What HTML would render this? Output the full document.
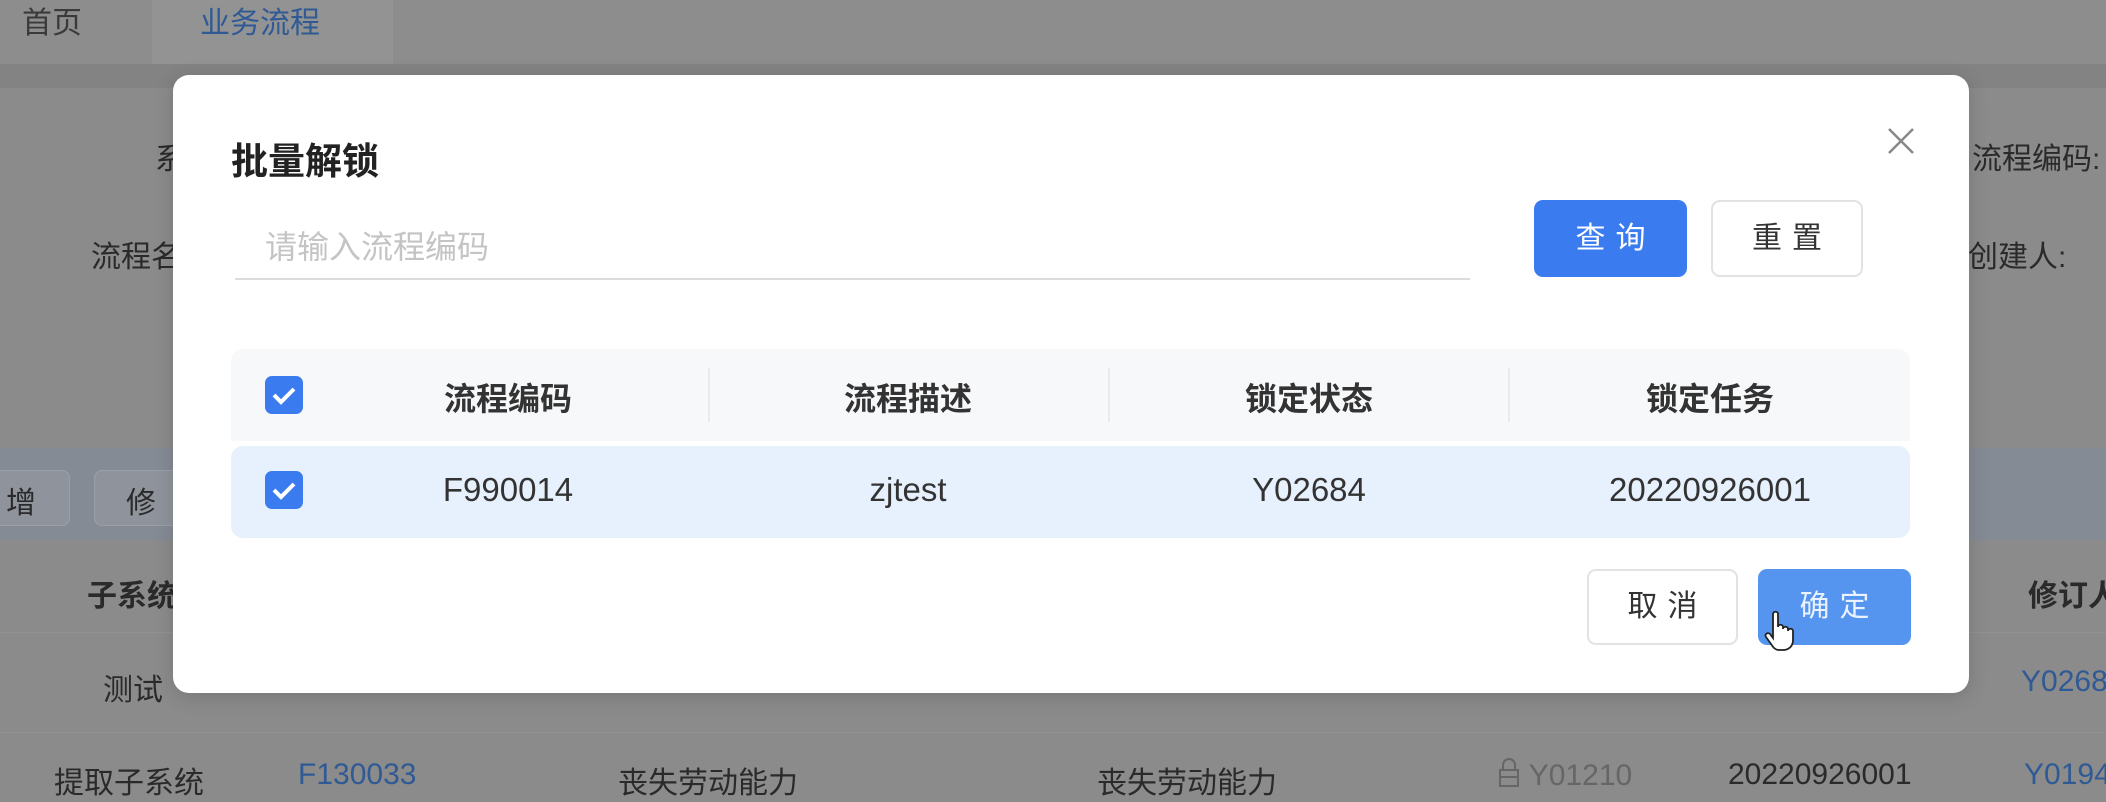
<!DOCTYPE html>
<html><head><meta charset="utf-8"><style>
*{margin:0;padding:0;box-sizing:border-box}
body{width:2106px;height:798px;overflow:hidden;background:#8b8b8b;font-family:"Liberation Sans","Noto Sans CJK SC",sans-serif;position:relative;color:#333}
.a{position:absolute;white-space:nowrap}
.bg{font-size:30px;color:#2a2a2a}
.blue{color:#2f5a94}
.gray{color:#555}
</style></head><body>
<div class="a" style="left:0;top:0;width:2106px;height:64px;background:#8d8d8d"></div>
<div class="a" style="left:152px;top:0;width:241px;height:64px;background:#939393"></div>
<div class="a" style="left:0;top:64px;width:2106px;height:24px;background:#838383"></div>
<div class="a bg" style="left:22px;top:-2px;color:#3a3a3a">首页</div>
<div class="a bg blue" style="left:200px;top:-2px">业务流程</div>
<div class="a bg" style="left:155px;top:134px">系</div>
<div class="a bg" style="left:91px;top:232px">流程名</div>
<div class="a bg" style="left:1972px;top:134px">流程编码:</div>
<div class="a bg" style="left:1968px;top:232px">创建人:</div>
<div class="a" style="left:0;top:448px;width:2106px;height:92px;background:#858b95"></div>
<div class="a" style="left:-10px;top:470px;width:80px;height:56px;background:#8f949c;border:1px solid #9aa0a8;border-radius:8px"></div>
<div class="a bg" style="left:6px;top:478px">增</div>
<div class="a" style="left:94px;top:470px;width:100px;height:56px;background:#8f949c;border:1px solid #9aa0a8;border-radius:8px"></div>
<div class="a bg" style="left:126px;top:478px">修</div>
<div class="a bg" style="left:87px;top:571px;font-weight:bold">子系统</div>
<div class="a bg" style="left:2028px;top:571px;font-weight:bold">修订人</div>
<div class="a" style="left:0;top:632px;width:2106px;height:1px;background:#929292"></div>
<div class="a bg" style="left:103px;top:665px">测试</div>
<div class="a bg blue" style="left:2021px;top:665px">Y0268</div>
<div class="a" style="left:0;top:732px;width:2106px;height:1px;background:#929292"></div>
<div class="a bg" style="left:54px;top:758px">提取子系统</div>
<div class="a bg blue" style="left:298px;top:758px">F130033</div>
<div class="a bg" style="left:618px;top:758px">丧失劳动能力</div>
<div class="a bg" style="left:1097px;top:758px">丧失劳动能力</div>
<div class="a bg" style="left:1497px;top:758px;color:#666">
<svg width="24" height="30" viewBox="0 0 24 30" style="vertical-align:-3px"><rect x="3" y="12" width="18" height="16" fill="none" stroke="#666" stroke-width="2"/><path d="M6 12V7a6 6 0 0 1 12 0v5" fill="none" stroke="#666" stroke-width="2"/><path d="M3 19h18" stroke="#666" stroke-width="2"/></svg> Y01210</div>
<div class="a bg" style="left:1728px;top:758px">20220926001</div>
<div class="a bg blue" style="left:2024px;top:758px">Y0194</div>

<div class="a" style="left:173px;top:75px;width:1796px;height:618px;background:#fff;border-radius:16px;box-shadow:0 4px 20px rgba(0,0,0,.15)"></div>
<div class="a" style="left:231px;top:131px;font-size:37px;font-weight:bold;color:#222">批量解锁</div>
<svg class="a" style="left:1887px;top:127px" width="28" height="28" viewBox="0 0 28 28"><path d="M2 2L26 26M26 2L2 26" stroke="#888" stroke-width="2.5"/></svg>
<div class="a" style="left:265px;top:222px;font-size:32px;color:#c4c4c4">请输入流程编码</div>
<div class="a" style="left:235px;top:278px;width:1235px;height:2px;background:#dcdcdc"></div>
<div class="a" style="left:1534px;top:200px;width:153px;height:77px;background:#3a7bef;border-radius:9px;color:#fff;font-size:30px;text-align:center;line-height:77px;letter-spacing:10px;padding-left:10px">查询</div>
<div class="a" style="left:1711px;top:200px;width:152px;height:77px;background:#fff;border:2px solid #e2e2e2;border-radius:9px;color:#333;font-size:30px;text-align:center;line-height:73px;letter-spacing:10px;padding-left:10px">重置</div>

<div class="a" style="left:231px;top:349px;width:1679px;height:92px;background:#f7f8fa;border-radius:12px 12px 0 0"></div>
<div class="a" style="left:708px;top:368px;width:2px;height:54px;background:#ebebeb"></div>
<div class="a" style="left:1108px;top:368px;width:2px;height:54px;background:#ebebeb"></div>
<div class="a" style="left:1508px;top:368px;width:2px;height:54px;background:#ebebeb"></div>
<div class="a" style="left:231px;top:446px;width:1679px;height:92px;background:#e7f1fd;border-radius:12px"></div>

<svg class="a" style="left:265px;top:376px" width="38" height="38" viewBox="0 0 38 38"><rect width="38" height="38" rx="7" fill="#3a7bef"/><path d="M9 19l7 7 13-13" fill="none" stroke="#fff" stroke-width="4"/></svg>
<svg class="a" style="left:265px;top:471px" width="38" height="38" viewBox="0 0 38 38"><rect width="38" height="38" rx="7" fill="#3a7bef"/><path d="M9 19l7 7 13-13" fill="none" stroke="#fff" stroke-width="4"/></svg>

<div class="a" style="left:408px;top:374px;width:200px;text-align:center;font-size:32px;font-weight:bold;color:#333">流程编码</div>
<div class="a" style="left:808px;top:374px;width:200px;text-align:center;font-size:32px;font-weight:bold;color:#333">流程描述</div>
<div class="a" style="left:1209px;top:374px;width:200px;text-align:center;font-size:32px;font-weight:bold;color:#333">锁定状态</div>
<div class="a" style="left:1610px;top:374px;width:200px;text-align:center;font-size:32px;font-weight:bold;color:#333">锁定任务</div>
<div class="a" style="left:408px;top:471px;width:200px;text-align:center;font-size:33px;color:#333">F990014</div>
<div class="a" style="left:808px;top:471px;width:200px;text-align:center;font-size:33px;color:#333">zjtest</div>
<div class="a" style="left:1209px;top:471px;width:200px;text-align:center;font-size:33px;color:#333">Y02684</div>
<div class="a" style="left:1560px;top:471px;width:300px;text-align:center;font-size:33px;color:#333">20220926001</div>

<div class="a" style="left:1587px;top:569px;width:151px;height:76px;background:#fff;border:2px solid #e2e2e2;border-radius:9px;color:#333;font-size:30px;text-align:center;line-height:72px;letter-spacing:10px;padding-left:10px">取消</div>
<div class="a" style="left:1758px;top:569px;width:153px;height:76px;background:#5595ef;border-radius:9px;color:#eaf2ff;font-size:30px;text-align:center;line-height:76px;letter-spacing:10px;padding-left:10px">确定</div>
<svg class="a" style="left:1764px;top:610px" width="34" height="42" viewBox="0 0 34 42"><path d="M9 4c0-3 5-3 5 0v13c0-3 5-3 5 0v2c0-3 5-3 5 0v2c0-3 5-3 5 0v9c0 6-4 10-10 10h-4c-4 0-6-3-8-6L2 27c-2-3 2-5 4-3l3 4z" fill="#fff" stroke="#222" stroke-width="1.8"/></svg>
</body></html>
